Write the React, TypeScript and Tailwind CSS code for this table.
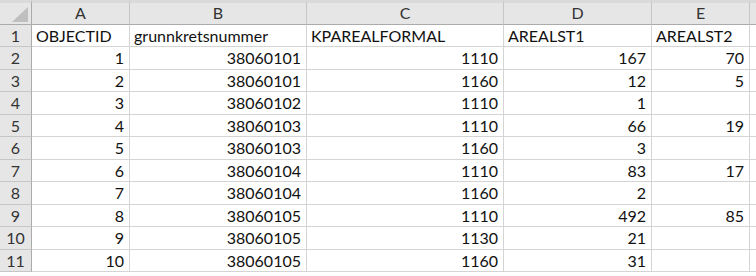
import React from "react";

const cols = ["A", "B", "C", "D", "E"];
const rows: (string | number)[][] = [
  ["OBJECTID", "grunnkretsnummer", "KPAREALFORMAL", "AREALST1", "AREALST2"],
  [1, 38060101, 1110, 167, 70],
  [2, 38060101, 1160, 12, 5],
  [3, 38060102, 1110, 1, ""],
  [4, 38060103, 1110, 66, 19],
  [5, 38060103, 1160, 3, ""],
  [6, 38060104, 1110, 83, 17],
  [7, 38060104, 1160, 2, ""],
  [8, 38060105, 1110, 492, 85],
  [9, 38060105, 1130, 21, ""],
  [10, 38060105, 1160, 31, ""],
];

export default function App() {
  return (
    <div
      className="w-[756px] h-[276px] overflow-hidden bg-white text-[16px] text-[#111]"
      style={{ fontFamily: "Lato, 'Open Sans', sans-serif" }}
    >
      <div className="grid grid-cols-[32px_98px_177px_197px_148px_98px_1fr] grid-rows-[25px_22px_23px_22px_23px_22px_23px_22px_23px_22px_23px_22px_1fr]">
        <div className="relative bg-[#e6e6e6] border-t-[3px] border-t-[#dadada] border-r border-b border-r-[#ababab] border-b-[#ababab]">
          <svg className="absolute right-[3px] bottom-[2px]" width="16" height="15" viewBox="0 0 16 15">
            <polygon points="16,0 16,15 0,15" fill="#bfbfbf" />
          </svg>
        </div>
        {cols.map((c) => (
          <div
            key={c}
            className="flex items-center justify-center bg-[#e6e6e6] border-t-[3px] border-t-[#dadada] border-r border-r-[#c6c6c6] border-b border-b-[#ababab] text-[#333] pb-[1px]"
          >
            {c}
          </div>
        ))}
        <div className="bg-[#e6e6e6] border-t-[3px] border-t-[#dadada] border-b border-b-[#ababab]" />
        {rows.map((r, i) => (
          <React.Fragment key={i}>
            <div className="flex items-center justify-center bg-[#e6e6e6] border-r border-r-[#ababab] border-b border-b-[#c6c6c6] text-[#333]">
              {i + 1}
            </div>
            {r.map((v, j) => (
              <div
                key={j}
                className={
                  i === 0
                    ? "flex items-center justify-start pl-[4px] border-r border-b border-[#d4d4d4] whitespace-nowrap overflow-hidden"
                    : "flex items-center justify-end pr-[5px] border-r border-b border-[#d4d4d4] whitespace-nowrap overflow-hidden"
                }
              >
                {v}
              </div>
            ))}
            <div className="border-b border-[#d4d4d4]" />
          </React.Fragment>
        ))}
      </div>
    </div>
  );
}
